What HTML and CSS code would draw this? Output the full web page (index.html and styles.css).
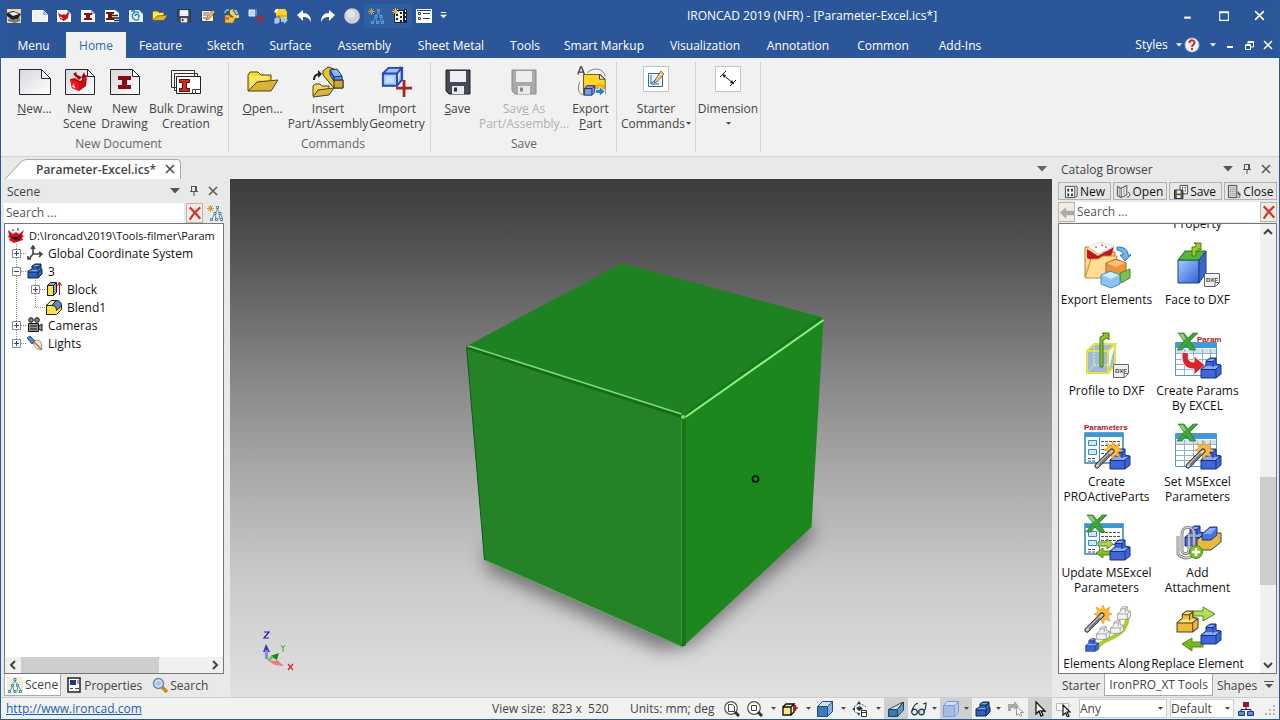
FILE: index.html
```html
<!DOCTYPE html>
<html lang="en">
<head>
<meta charset="utf-8">
<title>IRONCAD 2019</title>
<link rel="stylesheet" href="styles.css">
</head>
<body>
<svg class="defs" aria-hidden="true">
  <defs>
    <linearGradient id="g-blue" x1="0" y1="0" x2="1" y2="1"><stop offset="0" stop-color="#a9cbff"/><stop offset="1" stop-color="#2f5fd6"/></linearGradient>
    <linearGradient id="g-page" x1="0" y1="0" x2="1" y2="1"><stop offset="0" stop-color="#d5d7dc"/><stop offset="1" stop-color="#fff"/></linearGradient>
    <linearGradient id="g-green" x1="0" y1="0" x2="0" y2="1"><stop offset="0" stop-color="#c2e36c"/><stop offset="1" stop-color="#6fae12"/></linearGradient>
    <linearGradient id="g-folder" x1="0" y1="0" x2="1" y2="1"><stop offset="0" stop-color="#ffe9a8"/><stop offset="1" stop-color="#f0b24a"/></linearGradient>
  </defs>
  <symbol id="logo" viewBox="0 0 16 16"><path fill="#e8d9a4" d="M1 1h14v14H1z"/><path fill="#222" d="M1 5l6-2 8 3-3 5-6 1-5-4z"/><path fill="#eee" d="M3 5l5-1 5 2-6 2z"/><path fill="#777" d="M2 11l8 1 4-2v3l-5 2-7-2z"/></symbol>
  <symbol id="page-s" viewBox="0 0 16 16"><path fill="#eef0f4" stroke="#fff" d="M.5 2.500h11l4 4v7H.5z"/><path fill="#aab4c8" d="M11 2v5h5z"/></symbol>
  <symbol id="scene-s" viewBox="0 0 16 16"><path fill="#fff" d="M1 2h10l4 4v8H1z"/><path fill="#aab4c8" d="M11 2v4h4z"/><path fill="#c4161c" d="M2 5l4 2 2-1 1 1 4-3-1 6-4 3-4-2z"/><path stroke="#fff" fill="none" d="M4 9l2 1v1"/></symbol>
  <symbol id="draw-s" viewBox="0 0 16 16"><path fill="#fff" d="M1 2h10l4 4v8H1z"/><path fill="#aab4c8" d="M11 2v4h4z"/><path fill="#8d1015" d="M4 5h8v2h-2v3h2v2H4v-2h2V7H4z"/></symbol>
  <symbol id="bulk-s" viewBox="0 0 16 16"><path fill="#fff" d="M1 2h10l4 3v9H1z"/><path fill="#711" d="M2 4h8v2H8v4h2v2H2v-2h2V6H2z"/><path stroke="#222" stroke-width="1.500" d="M8 7.500h6M8 10h7M10 12.500h5"/></symbol>
  <symbol id="cat-s" viewBox="0 0 16 16"><path fill="#e6f2fb" d="M1 2h10l4 4v8H1z"/><path fill="none" stroke="#2c7fbd" stroke-width="1.500" d="M11 5a4 4 0 1 0 0 6M7 8a2 2 0 1 1 3 2M3 3h4"/></symbol>
  <symbol id="folder" viewBox="0 0 32 24"><path fill="#f6dd2c" stroke="#4e4310" d="M1 21V5l2-3h8l3 3h10v5"/><path fill="#ffe96a" d="M3 6h18v4H10L3 18z"/><path fill="#d9b23a" stroke="#4e4310" d="M1 21l9-9 21-2-7 11z"/></symbol>
  <symbol id="disk" viewBox="0 0 26 26"><path fill="#454a58" stroke="#1e2129" d="M1 1h24v24H4l-3-3z"/><path fill="#eef0f3" d="M5 2h16v11H5z"/><path fill="#e8e9ec" d="M7 17h12v8H7z"/><path fill="#30333d" d="M9 18.500h3v4H9z"/></symbol>
  <symbol id="disk-off" viewBox="0 0 26 26"><path fill="#a9a9a9" stroke="#8d8d8d" d="M1 1h24v24H4l-3-3z"/><path fill="#ededed" d="M5 2h16v11H5z"/><path fill="#e9e9e9" d="M7 17h12v8H7z"/><path fill="#888" d="M9 18.500h3v4H9z"/></symbol>
  <symbol id="saveas-s" viewBox="0 0 16 16"><path fill="#eee" stroke="#444" d="M1.500 2.500h12v11h-12z"/><path stroke="#777" d="M3 5h6M3 7h5M3 10h4"/><path fill="#e9b76b" stroke="#6a4010" stroke-width=".6" d="M13 2l2 2-6 7-3 1 1-3z"/></symbol>
  <symbol id="blocks-y" viewBox="0 0 32 32"><path fill="#e8c431" stroke="#3c3516" d="M11 5l5-4 6 2 9 11v8h-9L11 9z"/><path fill="#cfa638" stroke="#3c3516" d="M22 14h9v8h-9z"/><path fill="#8ab6f5" stroke="#1d3872" d="M18 4l7-1 5 7-8 1z"/><path fill="#3e6fd0" stroke="#1d3872" d="M18 4l4 7v4l-4-6z"/><path fill="#5c8fe4" stroke="#1d3872" d="M22 11l8-1v4h-8z"/><path fill="#f2d55e" stroke="#4e4310" d="M1 30V20l2-2h5l2 2h7v3"/><path fill="#dab348" stroke="#4e4310" d="M1 31l5-7 16-2-5 7z"/><path fill="none" stroke="#222" stroke-width="2" d="M2 14c0-5 3-6 6-6"/><path fill="#222" d="M6 4l4 4-4 4z"/></symbol>
  <symbol id="insert-s" viewBox="0 0 16 16"><path fill="#f0c040" stroke="#7b5b10" stroke-width=".7" d="M1 15V7h5v2h6l-3 6z"/><path fill="#f7d53c" d="M6 2l4-1 5 6v3h-4L6 6z"/><path fill="#7fb8f0" stroke="#173f78" stroke-width=".7" d="M9 2l4-1 2 5-3 1z"/><path fill="#e8632a" d="M2 9h3v3H2z"/><path stroke="#fff" fill="none" d="M1 5c0-3 2-3 4-3"/></symbol>
  <symbol id="import" viewBox="0 0 34 34"><path fill="#f5dfa6" stroke="#2b4fa5" d="M14 3l7-2 2 1v13l-5 4z"/><path fill="#9fc4ff" stroke="#1f49ad" stroke-width="2" d="M2 8h15v13H2zM2 8l6-6h14l-5 6M17 21l5-6V2"/><path fill="#c9deff" d="M5 11h9v7H5z"/><path fill="#a9232b" d="M23 15h3v7h7v3h-7v8h-3v-8h-7v-3h7z"/></symbol>
  <symbol id="import-s" viewBox="0 0 16 16"><path fill="#b9d4ff" stroke="#e8f0ff" d="M1 2h6v6H1z"/><path fill="#5589dd" d="M7 2l2-1v6L7 9z"/><path fill="#b0232b" d="M11 7h2v3h3v2h-3v3h-2v-3H8v-2h3z"/></symbol>
  <symbol id="export" viewBox="0 0 32 34"><path fill="none" stroke="#777" d="M12 7c7-6 17-5 19 4M4 17c-3 8-1 13 5 14"/><path fill="none" stroke="#444" stroke-width="1.500" d="M2 9l3-8h1l3 8M3.500 6.500h4"/><path fill="#ffd42a" stroke="#6b5100" d="M8 9h18l5 5v16H8z"/><path fill="#f5ae16" d="M9 20h21v9H9z"/><path fill="#f1f1f1" d="M9 25h22v7H9z"/><path fill="#fff" stroke="#333" d="M25 9v5h6z"/><path fill="#7f9bd8" stroke="#102d6e" d="M9 24l3-3h8v7l-3 3H9zM9 24h8v7M17 24l3-3"/><path fill="#2279dc" d="M21 25h4v-3l6 5-6 5v-3h-4z" stroke="#fff" stroke-width=".7"/></symbol>
  <symbol id="export-s" viewBox="0 0 16 16"><path fill="#ffd42a" d="M4 1h9l2 3v7H4z"/><path fill="#fff" d="M2 4l2-3h2L4 5z"/><path fill="#f5ae16" d="M4 7h11v2H4z"/><path fill="#a9c5f3" stroke="#244b93" stroke-width=".7" d="M2 11l2-2h4v5l-2 2H2z"/><path fill="#8fd0ff" d="M9 11h3V9l4 3-4 4v-2H9z"/></symbol>
  <symbol id="undo" viewBox="0 0 16 16"><path fill="#fff" d="M1 7l6-5v3c5 0 8 3 8 9-2-4-4-5-8-5v4z"/></symbol>
  <symbol id="redo" viewBox="0 0 16 16"><path fill="#fff" d="M15 7L9 2v3c-5 0-8 3-8 9 2-4 4-5 8-5v4z"/></symbol>
  <symbol id="sphere" viewBox="0 0 16 16"><circle cx="8" cy="8" r="7.800" fill="#d0d1d2"/><circle cx="7" cy="6" r="4" fill="#e3e4e4"/></symbol>
  <symbol id="tree" viewBox="0 0 16 16"><path stroke="#6293b5" fill="none" d="M10.500 4L8 9m2.500-5L13 9M7 10l-2 4m3-4l1 4m4-4l-1 4m2-4l2 4"/><path fill="#fff" stroke="#447fa8" d="M9.500 1.500h2v2h-2zM7 7.500h2v2H7zM12 7.500h2v2h-2zM3.500 13.500h2v2h-2zM8.500 13.500h2v2h-2zM13.500 13.500h2v2h-2z"/><path stroke="#d49a28" d="M3.500 0v7M0 3.500h7M1 1l5 5M6 1L1 6"/></symbol>
  <symbol id="tree-q" viewBox="0 0 16 16"><path stroke="#5a93cf" fill="none" d="M10.500 4L8 9m2.500-5L13 9M7 10l-2 4m3-4l1 4m4-4l-1 4m2-4l2 4"/><path fill="#2b579a" stroke="#6aa5dd" d="M9.500 1.500h2v2h-2zM7 7.500h2v2H7zM12 7.500h2v2h-2zM3.500 13.500h2v2h-2zM8.500 13.500h2v2h-2zM13.500 13.500h2v2h-2z"/><path stroke="#c09a58" d="M3.500 0v7M0 3.500h7M1 1l5 5M6 1L1 6"/></symbol>
  <symbol id="tree-p" viewBox="0 0 16 16"><path fill="#f1eedb" d="M0 0h16v16H0z"/><path stroke="#6293b5" fill="none" d="M8 4L5 8m3-4l3 4M5 10l-2 4m3-4l1 4m4-4l-1 4m2-4l2 4"/><path fill="#fff" stroke="#447fa8" d="M7 1.500h2v2H7zM4.500 7.500h2v2h-2zM9.500 7.500h2v2h-2zM1.500 13.500h2v2h-2zM7 13.500h2v2H7zM12.500 13.500h2v2h-2z"/></symbol>
  <symbol id="building" viewBox="0 0 16 16"><path fill="#f3f3f3" stroke="#222" d="M2.500 2.500h9v12h-9z"/><path fill="#222" d="M12 1h3v14h-3z"/><path stroke="#222" stroke-width="2" stroke-dasharray="2 2" d="M5 6v8M9 4v10"/><path stroke="#fff" stroke-dasharray="2 2" d="M13.500 2v12"/><path stroke="#eeb14b" d="M3.500 0v7M0 3.500h7M1 1l5 5M6 1L1 6"/></symbol>
  <symbol id="list" viewBox="0 0 16 16"><path fill="#fff" d="M0 1h16v14H0z"/><path stroke="#27436f" d="M7 5.500h7M7 10.500h7M1 2.500h14"/><path fill="none" stroke="#27436f" d="M2.500 4.500h2v2h-2zM2.500 9.500h2v2h-2z"/></symbol>
  <symbol id="more" viewBox="0 0 8 8"><path fill="#fff" d="M1 0h6v1H1zM0 3h8L4 7z"/></symbol>
  <symbol id="page" viewBox="0 0 32 26"><path fill="url(#g-page)" stroke="#25272d" d="M.5.500h22l9 9v16H.5z"/><path fill="#fff" stroke="#25272d" d="M22.500.500v9h9z"/></symbol>
  <symbol id="scene-b" viewBox="0 0 30 26"><path fill="url(#g-page)" stroke="#25272d" d="M.5.500h22l7 7v18H.5z"/><path fill="#fff" stroke="#25272d" d="M22.500.500v7h7z"/><path fill="#c10d14" d="M5 10l5-1 5 3 7-4-1 9-7 5-7-3z"/><path fill="#f0161f" d="M5 10l9 4v8l-7-3z"/><path fill="#a00" d="M8 5l3-2 1 3 5 2-3 3zM17 7l2-4 1 3 3 1-6 4z"/><path stroke="#fff" fill="none" d="M7 17l3 2-2-4"/></symbol>
  <symbol id="draw-b" viewBox="0 0 30 26"><path fill="url(#g-page)" stroke="#25272d" d="M.5.500h22l7 7v18H.5z"/><path fill="#fff" stroke="#25272d" d="M22.500.500v7h7z"/><path fill="#8d090e" d="M8 7h13v4h-4v5h4v4H8v-4h4v-5H8z"/></symbol>
  <symbol id="bulk-b" viewBox="0 0 32 26"><path fill="#f6f6f6" stroke="#333" d="M1.500 1.500h23v17h-23zM4.500 4.500h23v17h-23z"/><path fill="#fff" stroke="#222" d="M6.500 7.500h24v17h-24z"/><path fill="#d63118" stroke="#441010" d="M9.500 10.500h10v3h-3v6h3v3h-10v-3h3v-6h-3z"/><path fill="none" stroke="#444" d="M22.500 20.500h8M25.500 20.500v4M22.500 20.500v4"/></symbol>
  <symbol id="starter" viewBox="0 0 26 26"><path fill="#fff" stroke="#c3c3c3" d="M.5.500h25v25H.5z"/><path fill="#e6f5ff" stroke="#2a6f9d" d="M5.500 7.500h14v13h-14z"/><path stroke="#2a6f9d" fill="none" d="M8 9v9h8M8 18l8-8"/><path fill="#efc48b" stroke="#704720" stroke-width=".7" d="M18 5l3 3-7 8-3 1 1-3z"/></symbol>
  <symbol id="dim" viewBox="0 0 26 26"><path fill="#fff" stroke="#c3c3c3" d="M.5.500h25v25H.5z"/><path stroke="#222" fill="none" d="M7 8l12 10M5 11l6-6M15 20l6-6"/><path fill="#222" d="M7 8l4 1-2 3zM19 18l-4-1 2-3z"/></symbol>
  <symbol id="min" viewBox="0 0 12 12"><path fill="#fff" d="M3 7h6v2H3z"/></symbol>
  <symbol id="max" viewBox="0 0 12 12"><path fill="none" stroke="#fff" d="M2.500 2.500h8v8h-8zM2 3.500h9"/></symbol>
  <symbol id="restore" viewBox="0 0 12 12"><path fill="none" stroke="#fff" d="M2.500 5.500h5v5h-5zM5 5V2.500h5.500V8H8M5 3.500h5M2 6.500h5"/></symbol>
  <symbol id="x" viewBox="0 0 12 12"><path fill="none" stroke="currentColor" stroke-width="1.500" d="M2 2l8 8M10 2l-8 8"/></symbol>
  <symbol id="pin" viewBox="0 0 12 12"><path fill="none" stroke="#555" d="M3.500 1v5.500M8.500 1v5.500M3 1.500h6M2 6.500h8M6 7v4M7.500 2v4"/></symbol>
  <symbol id="caret" viewBox="0 0 10 6"><path fill="currentColor" d="M0 0h10L5 5.500z"/></symbol>
  <symbol id="redx" viewBox="0 0 16 16"><path fill="none" stroke="#c8373a" stroke-width="2.500" d="M2 1c4 4 8 8 12 13M14 1C9 5 5 10 2 15"/></symbol>
  <symbol id="help" viewBox="0 0 16 16"><circle cx="8" cy="8" r="7" fill="#f5f5f8" stroke="#a5b9da"/><path fill="none" stroke="#d3232a" stroke-width="2" d="M5.500 6c0-4 5.500-3 5 0 0 1.500-2.500 1.500-2.500 4M8 11v2"/></symbol>
  <symbol id="robot" viewBox="0 0 16 16"><path fill="#d0141b" d="M0 3l5 4 3-2 3 2 5-4-2 5 2 1-2 2 1 2-6 2-3 1-5-3 1-2-2-1 1-2z"/><path stroke="#611" d="M5 2v2M10 1v3M3 10l5 3 5-3"/><path fill="#8a0d12" d="M9 9l5-2-2 6-3 1z"/></symbol>
  <symbol id="axes" viewBox="0 0 16 16"><path fill="none" stroke="#444" stroke-width="1.600" d="M6 2v7h9M6 9l-4 5M4 4l2-3 2 3M12 7l3 2-3 3M1 11v3h3"/></symbol>
  <symbol id="part" viewBox="0 0 16 16"><path fill="#2d62b8" stroke="#0c2148" d="M1 8l4-2V3l3-2h6v4l1 2v4l-4 4H1z"/><path fill="#7aa9ec" d="M2 8l3-1h4l5-1-3 3H2zM6 3l2-1h5l-2 2H6z"/><path stroke="#0c2148" fill="none" d="M2 9h9v5M6 4h5v4M11 9l4-3M11 4l3-2"/></symbol>
  <symbol id="block" viewBox="0 0 16 16"><path fill="#ffe14a" stroke="#222" d="M1.500 4.500h6v10h-6z"/><path fill="#8aa6c8" stroke="#222" d="M1.500 4.500l3-3h6l-3 3zM7.500 4.500l3-3v10l-3 3z"/><path stroke="#c00" fill="none" d="M13.500 2v12M11.500 5l2-4 2 4"/></symbol>
  <symbol id="blend" viewBox="0 0 16 16"><path fill="#ffe14a" stroke="#222" d="M.5 6v9.500h10l5-5V7L11 3z"/><path fill="#fff0a0" stroke="#222" d="M.5 6.500L5 1.500h5L6 6.500z"/><path fill="#5f86b4" stroke="#222" d="M6 6.500l4-5c4 0 5.500 2 5.500 5.500l-5 4.500c0-3-1.500-5-4.500-5z"/></symbol>
  <symbol id="camera" viewBox="0 0 16 16"><circle cx="4" cy="3" r="2.300" fill="#888" stroke="#111"/><circle cx="10" cy="3" r="2.300" fill="#888" stroke="#111"/><path fill="#999" stroke="#111" d="M1.500 6.500h10v8h-10zM12 9l3-2v7l-3-2"/><path stroke="#111" d="M3 9h7M3 12h7"/></symbol>
  <symbol id="light" viewBox="0 0 16 16"><path fill="#f0e3d3" stroke="#999" d="M6 8c1-3 5-4 8-1l1 7c-4 1-7 0-9-6z"/><path fill="#4e86c6" stroke="#28507e" d="M0 3l3-2 5 5-3 3z"/><path stroke="#c76a2a" stroke-width="1.500" d="M7 7l8 8"/></symbol>
  <symbol id="t-v" viewBox="0 0 19 18"><path stroke="#888" stroke-dasharray="1 1" d="M9.500 0v18"/></symbol>
  <symbol id="t-elbow" viewBox="0 0 19 18"><path fill="none" stroke="#888" stroke-dasharray="1 1" d="M9.500 0v9.500H19"/></symbol>
  <symbol id="t-plus" viewBox="0 0 19 18"><path stroke="#888" stroke-dasharray="1 1" d="M9.500 0v18M14 9.500h5"/><path fill="#fff" stroke="#8a8a8a" d="M5.500 5.500h8v8h-8z"/><path stroke="#34478c" d="M7 9.500h5M9.500 7v5"/></symbol>
  <symbol id="t-last" viewBox="0 0 19 18"><path stroke="#888" stroke-dasharray="1 1" d="M9.500 0v9M14 9.500h5"/><path fill="#fff" stroke="#8a8a8a" d="M5.500 5.500h8v8h-8z"/><path stroke="#34478c" d="M7 9.500h5M9.500 7v5"/></symbol>
  <symbol id="t-minus" viewBox="0 0 19 18"><path stroke="#888" stroke-dasharray="1 1" d="M9.500 0v18M14 9.500h5"/><path fill="#fff" stroke="#8a8a8a" d="M5.500 5.500h8v8h-8z"/><path stroke="#34478c" d="M7 9.500h5"/></symbol>
  <symbol id="props" viewBox="0 0 14 16"><path fill="#fff" stroke="#222" stroke-width="1.500" d="M1 1h12v14H1z"/><path fill="#1f3a7a" d="M3 3h6v5H3z"/><path stroke="#444" d="M10 4h2M10 6h2M3 11.500h3M8 11.500h4"/></symbol>
  <symbol id="lens" viewBox="0 0 16 16"><path stroke="#c98a1e" stroke-width="3.500" d="M10 10l5 5"/><circle cx="6.500" cy="6.500" r="5" fill="#cfe0f6" stroke="#6c86b0" stroke-width="1.500"/><circle cx="6.500" cy="6.500" r="2.500" fill="#a7c3ea"/></symbol>
  <symbol id="zoomfit" viewBox="0 0 16 16"><circle cx="7" cy="7" r="6.300" fill="#fff" stroke="#555" stroke-width="1.200"/><path stroke="#333" stroke-width="3" d="M11 11l4 4"/><path fill="#fff" stroke="#444" d="M4.500 3.500h4l2 2v5h-6z"/></symbol>
  <symbol id="zoomwin" viewBox="0 0 16 16"><circle cx="7" cy="7" r="6.300" fill="#fff" stroke="#555" stroke-width="1.200"/><path stroke="#333" stroke-width="3" d="M11 11l4 4"/><path fill="#fff" stroke="#444" d="M4.500 4.500h5v5h-5z"/></symbol>
  <symbol id="ycube" viewBox="0 0 16 16"><path fill="#fff3a0" stroke="#111" stroke-width="1.400" d="M1 6h8v8H1zM1 6l3-3h8L9 6M9 14l3-3V3"/><path fill="#f9e97a" d="M2 7h6v6H2z"/><path stroke="#c1121c" stroke-width="1.500" d="M13.500 4v6M11 7h5"/></symbol>
  <symbol id="bcube" viewBox="0 0 16 16"><path fill="#3d78bc" stroke="#234f85" d="M.5 5.500h10v10H.5z"/><path fill="#cfe2f6" stroke="#234f85" d="M.5 5.500l5-5h10l-5 5z"/><path fill="#7fb0e2" stroke="#234f85" d="M10.500 5.500l5-5v10l-5 5z"/></symbol>
  <symbol id="lcube" viewBox="0 0 16 16"><path fill="#a4bbe6" stroke="#7f9cd4" d="M.5 4.500h11v11H.5z"/><path fill="#d3dff5" stroke="#7f9cd4" d="M.5 4.500l4-4h11l-4 4z"/><path fill="#b7caee" stroke="#7f9cd4" d="M11.500 4.500l4-4v11l-4 4z"/></symbol>
  <symbol id="orbit" viewBox="0 0 16 16"><path fill="#333" d="M7 0l2 3H5zM0 8l3-2v4zM7 15l-2-3h3zM4 7l4-2 3 3-4 2z"/><path stroke="#2a7fae" fill="none" stroke-dasharray="2 1" d="M2 6c3-4 8-4 12 0M2 10c1 2 3 2 5 2"/><path fill="#fff" stroke="#333" d="M9.500 9.500h5v6h-5zM9.500 11.500h5"/></symbol>
  <symbol id="wedge" viewBox="0 0 16 16"><path fill="#3978ad" stroke="#1e4568" d="M.5 8.500h9v7h-9z"/><path fill="#d9ecf8" stroke="#1e4568" d="M.5 8.500L15 1 9.500 8.500z"/><path fill="#5f97c2" stroke="#1e4568" d="M9.500 8.500l6-7.500v8l-6 6.500z"/></symbol>
  <symbol id="glasses" viewBox="0 0 16 16"><circle cx="3.500" cy="11" r="2.800" fill="#e0eff8" stroke="#234" stroke-width="1.200"/><circle cx="10.500" cy="11" r="2.800" fill="#b9dbee" stroke="#234" stroke-width="1.200"/><path fill="none" stroke="#234" stroke-width="1.200" d="M1 10c1-4 3-7 6-8M6 11h2M13 10c2-2 2-5 2-8l-3 1"/></symbol>
  <symbol id="arrow-g" viewBox="0 0 16 16"><path fill="#a9a9a9" d="M0 3h6V0l5 5-5 4V7H3v3H0z"/><path fill="#fff" stroke="#999" d="M8.500 5.500v9l2-2 2 3 1-1-1-3h3z"/></symbol>
  <symbol id="cursor" viewBox="0 0 12 16"><path fill="#fff" stroke="#111" stroke-width="1.300" d="M2 1v12l3-3 2 5 2-1-2-4h4z"/></symbol>
  <symbol id="cursor-box" viewBox="0 0 16 16"><path fill="#fff" stroke="#bbb" d="M.5 2.500h12v7H.5z"/><path fill="#fff" stroke="#111" stroke-width="1.200" d="M7 4v10l2.500-2 2 4 1.500-1-2-4h3z"/></symbol>
  <symbol id="org" viewBox="0 0 16 16"><path stroke="#222" fill="none" d="M8 5v4M3 11V8.500h10V11"/><path fill="#8e1a34" d="M5 1h6v5H5z"/><path fill="#5d8be0" stroke="#1b3d86" d="M.5 10.500h6v4h-6zM9.500 10.500h6v4h-6z"/></symbol>
  <symbol id="grip" viewBox="0 0 12 12"><path fill="#b5b5b5" d="M9 0h2v2H9zM9 4h2v2H9zM9 8h2v2H9zM5 4h2v2H5zM5 8h2v2H5zM1 8h2v2H1z"/></symbol>
  <symbol id="book" viewBox="0 0 16 16"><path fill="#f7f7f2" stroke="#444" d="M1.500 2.500h10v12h-10zM12 2l2 1v10l-2 1"/><path stroke="#333" stroke-width="2" stroke-dasharray="3 2" d="M4.500 5v8M8.500 5v8"/></symbol>
  <symbol id="book-open" viewBox="0 0 16 16"><path fill="#eee" stroke="#444" d="M1.500 2.500l4 2v10l-4-2zM5.500 4.500l6-3v10l-6 3"/><path stroke="#333" stroke-dasharray="1 1" d="M8.500 4v8M3.500 4v9"/><path fill="none" stroke="#333" d="M13 9c3 1 2 5-1 5"/></symbol>
  <symbol id="book-save" viewBox="0 0 16 16"><path fill="#f7f7f2" stroke="#444" d="M6.500 1.500h8v9h-8z"/><path stroke="#333" stroke-dasharray="2 1" d="M9 3v6M12 3v6"/><path fill="#55604a" stroke="#222" d="M.5 6.500h9v9h-9z"/><path fill="#eee" d="M3 7h4v3H3zM3 12h4v3H3z"/></symbol>
  <symbol id="book-close" viewBox="0 0 16 16"><path fill="#d9d9d9" stroke="#444" d="M1.500 1.500h9v13h-9z"/><path stroke="#777" stroke-dasharray="1 1" d="M3 4h7M3 6h7M3 8h7M3 10h7M3 12h7"/><path fill="none" stroke="#333" d="M12 9c3 1 2 5 0 6M12 8v3h2"/></symbol>
  <symbol id="back" viewBox="0 0 16 16"><path fill="#a9a9a9" d="M0 8l7-6v4h9v5H7v4z"/></symbol>
  <symbol id="bigpart" viewBox="0 0 22 22"><path fill="#3f66d6" stroke="#173085" d="M1 12l5-4V4l4-3h6v6l5 1v9l-5 4H1z"/><path fill="#86aaf5" d="M2 12l4-3h13l-3 3zM7 4l3-2h5l-2 2z"/><path fill="none" stroke="#173085" d="M1 12.500h15v8M6 4.500h7V10M16 12l5-4M13 4.500l3-3"/></symbol>
  <symbol id="goldpart" viewBox="0 0 22 22"><path fill="#eebc3c" stroke="#54400e" d="M1 12l5-4V4l4-3h6v6l5 1v9l-5 4H1z"/><path fill="#ffe493" d="M2 12l4-3h13l-3 3zM7 4l3-2h5l-2 2z"/><path fill="none" stroke="#54400e" d="M1 12.500h15v8M6 4.500h7V10M16 12l5-4M13 4.500l3-3"/></symbol>
  <symbol id="whitepart" viewBox="0 0 22 22"><path fill="#f3f3f3" stroke="#777" d="M1 12l5-4V4l4-3h6v6l5 1v9l-5 4H1z"/><path fill="none" stroke="#777" d="M1 12.500h15v8M6 4.500h7V10M16 12l5-4M13 4.500l3-3"/></symbol>
  <symbol id="xl" viewBox="0 0 22 20"><path fill="#3fa535" stroke="#2b7a25" stroke-width=".7" d="M1 1h6l4 5 5-5h5l-8 8 6 9h-6l-4-5-4 5H0l7-9z"/><path fill="#8dd47d" d="M2 2h4l3 5-2 1z"/></symbol>
  <symbol id="sheet" viewBox="0 0 42 34"><path fill="#fff" stroke="#5d93c4" d="M.5.500h41v33H.5z"/><path fill="#3f9bd8" d="M1 1h40v5H1z"/><path fill="#cfe3f5" d="M1 7h40v4H1z"/><path stroke="#8fb4d6" fill="none" d="M1 11.500h40M1 17.500h40M1 22.500h40M1 27.500h40M9.500 7v26M18.500 7v26M27.500 7v26M35.500 7v26"/></symbol>
  <symbol id="form" viewBox="0 0 40 32"><path fill="#fff" stroke="#2f86be" stroke-width="1.500" d="M1 1h38v30H1z"/><path fill="#3a97d2" d="M1 1h38v4H1z"/><path fill="#cfe8fa" stroke="#3a8cc2" d="M4.500 8.500h8v5h-8zM4.500 17.500h8v5h-8z"/><path stroke="#555" stroke-dasharray="3 1" d="M17 9.500h20M17 13.500h20M17 17.500h20M17 21.500h20M4 26.500h8M4 29h8"/><path stroke="#3a8cc2" d="M15.500 5v26"/></symbol>
  <symbol id="wand" viewBox="0 0 28 28"><path fill="#ffb938" stroke="#e08a16" stroke-width=".6" d="M19 0l2 5 5-3-2 5 4 2-4 2 2 5-5-2-2 5-2-5-5 2 2-5-4-2 4-2-2-5 5 3z"/><path stroke="#333" stroke-width="5" stroke-linecap="round" d="M3 25L18 10"/><path stroke="#ccc" stroke-width="3" stroke-linecap="round" d="M3 25L18 10"/><path stroke="#777" stroke-width="2" d="M5 24L16 13"/></symbol>
  <symbol id="tag" viewBox="0 0 16 14"><path fill="#f0f0f0" stroke="#666" d="M.5.500h15v9l-4 4H.5zM15 9.500h-4v4"/></symbol>
  <symbol id="export-el" viewBox="0 0 48 48"><path fill="url(#g-folder)" stroke="#c07a1d" d="M2 36V6h10l4 5h16v25z"/><path fill="#c3121b" d="M4 8l11 7 16-9-3 9-13 7-11-5z"/><path fill="#fff" stroke="#bbb" stroke-width=".6" d="M5 6l12-5 14 4-15 8z"/><path stroke="#c3121b" d="M12 6h2M18 4h2M22 6h2"/><path fill="#ffdf95" stroke="#c88a2c" d="M2 37l6-19h7l5-3h14l-6 22z"/><path fill="#70b6ea" stroke="#2b74a8" d="M34 6c8 0 11 3 11 8h3l-6 6-5-6h3c0-3-2-4-6-5z"/><path fill="#ee9337" stroke="#ba611a" d="M23 22l10-4 10 4v10l-10 4-10-4z"/><path fill="#ffc27d" d="M24 22l9-3 9 3-9 4z"/><path fill="#78c250" stroke="#4d8a24" d="M37 32l10-4v9l-9 5z"/><path fill="#8ec4f2" stroke="#4189c4" d="M18 34l9-4 10 4v9l-9 4-10-4z"/><path fill="#d4ebff" d="M19 34l9-3 8 3-8 4z"/></symbol>
  <symbol id="face-dxf" viewBox="0 0 48 48"><path fill="url(#g-blue)" stroke="#1f3d8c" d="M4 19h21v23H4z"/><path fill="#4fb83c" stroke="#246b1a" d="M4 19l7-9h21l-7 9z"/><path fill="#3b66c8" stroke="#1f3d8c" d="M25 19l7-9v22l-7 10z"/><path fill="#9ccc2c" stroke="#4b7d0e" d="M18 15V6h4V3l-2-1h7v7l-2-2v3h-3v5z"/><use href="#tag" x="30" y="32" width="16" height="14"/></symbol>
  <symbol id="prof-dxf" viewBox="0 0 48 48"><path fill="#9eb8de" stroke="#e4e13e" stroke-width="2" d="M4 19h21v22H4zM4 19l7-7h21l-7 7M25 41l7-8V12"/><path stroke="#fffb7a" stroke-dasharray="2 1" fill="none" d="M11 12v21h21M11 33l-7 8"/><path fill="#8cc028" stroke="#457a10" d="M17 35V5l4-2-2-2h7v7l-2-2-4 2v27z"/><use href="#tag" x="30" y="32" width="16" height="14"/></symbol>
  <symbol id="params-xl" viewBox="0 0 48 48"><use href="#sheet" x="1" y="10" width="42" height="34"/><use href="#xl" x="3" y="0" width="22" height="20"/><path fill="#d8262c" stroke="#fff" d="M8 20c-1 14 5 17 12 17v6l11-10-11-9v6c-5 0-7-3-5-9z"/><use href="#bigpart" x="26" y="25" width="22" height="22"/></symbol>
  <symbol id="proactive" viewBox="0 0 48 48"><use href="#form" x="1" y="9" width="40" height="32"/><use href="#bigpart" x="26" y="25" width="22" height="22"/><use href="#wand" x="11" y="18" width="28" height="28"/></symbol>
  <symbol id="set-xl" viewBox="0 0 48 48"><use href="#sheet" x="1" y="10" width="42" height="34"/><use href="#xl" x="3" y="0" width="22" height="20"/><use href="#bigpart" x="26" y="25" width="22" height="22"/><use href="#wand" x="11" y="18" width="28" height="28"/></symbol>
  <symbol id="upd-xl" viewBox="0 0 48 48"><use href="#form" x="1" y="9" width="40" height="32"/><use href="#xl" x="3" y="0" width="22" height="20"/><path fill="url(#g-green)" stroke="#548b12" d="M15 28h9v-3l6 5-6 5v-3h-9zM29 37h-9v-3l-7 5 7 5v-3h9z"/><use href="#bigpart" x="26" y="25" width="22" height="22"/></symbol>
  <symbol id="attach" viewBox="0 0 48 48"><use href="#bigpart" x="10" y="11" width="22" height="22"/><path fill="#e9b93f" stroke="#54400e" d="M23 26l9-7h15v9l-10 8H23z"/><path fill="#ffe493" d="M24 26l9-6h12l-8 6z"/><path fill="#4b76cf" stroke="#173085" d="M28 20l8-7h7v8l-6 5h-9z"/><path fill="#86aaf5" d="M29 20l7-6h6l-5 6z"/><path fill="none" stroke="#888" stroke-width="3" d="M15 20v16c0 5-7 5-7 0V20c0-9 12-9 12 0v17c0 8-11 9-16 3V22"/><path fill="none" stroke="#e5e5e5" d="M15 20v16c0 5-7 5-7 0V20c0-9 12-9 12 0v17c0 8-11 9-16 3V22"/><circle cx="22" cy="38" r="6.500" fill="#7dc32e" stroke="#3f8a12"/><path stroke="#fff" stroke-width="2.500" d="M18 38h8M22 34v8"/></symbol>
  <symbol id="along" viewBox="0 0 48 48"><path fill="none" stroke="#a6cf2c" stroke-width="4" d="M13 46c5-17 30-8 32-36"/><use href="#wand" x="1" y="0" width="28" height="28"/><use href="#whitepart" x="34" y="1" width="14" height="14"/><use href="#whitepart" x="27" y="15" width="14" height="14"/><use href="#whitepart" x="13" y="21" width="14" height="14"/><use href="#bigpart" x="2" y="33" width="14" height="14"/></symbol>
  <symbol id="replace" viewBox="0 0 48 48"><path fill="url(#g-green)" stroke="#548b12" d="M19 6h10V2l12 7-12 7v-5H19zM29 37H18v-4L8 39l10 7v-4h11z"/><use href="#goldpart" x="2" y="5" width="23" height="23"/><use href="#bigpart" x="26" y="18" width="22" height="22"/></symbol>
</svg>

<div class="app">
  <header class="titlebar">
    <div class="qat">
      <button class="q logo" aria-label="IronCAD"><svg><use href="#logo"/></svg></button>
      <button class="q" aria-label="New"><svg><use href="#page-s"/></svg></button>
      <button class="q" aria-label="New scene"><svg><use href="#scene-s"/></svg></button>
      <button class="q" aria-label="New drawing"><svg><use href="#draw-s"/></svg></button>
      <button class="q" aria-label="Bulk drawing"><svg><use href="#bulk-s"/></svg></button>
      <button class="q" aria-label="Catalog"><svg><use href="#cat-s"/></svg></button>
      <button class="q" aria-label="Open"><svg><use href="#folder"/></svg></button>
      <button class="q" aria-label="Save"><svg class="small"><use href="#disk"/></svg></button>
      <button class="q" aria-label="Save as"><svg><use href="#saveas-s"/></svg></button>
      <button class="q" aria-label="Insert part"><svg><use href="#insert-s"/></svg></button>
      <button class="q" aria-label="Import geometry"><svg><use href="#import-s"/></svg></button>
      <button class="q" aria-label="Export part"><svg><use href="#export-s"/></svg></button>
      <button class="q" aria-label="Undo"><svg><use href="#undo"/></svg></button>
      <button class="q" aria-label="Redo"><svg><use href="#redo"/></svg></button>
      <button class="q" aria-label="Render"><svg><use href="#sphere"/></svg></button>
      <button class="q on" aria-label="Scene browser"><svg><use href="#tree-q"/></svg></button>
      <button class="q on" aria-label="Catalogs"><svg><use href="#building"/></svg></button>
      <button class="q" aria-label="Properties"><svg><use href="#list"/></svg></button>
      <button class="q more" aria-label="Customize"><svg><use href="#more"/></svg></button>
    </div>
    <div class="title">IRONCAD 2019 (NFR) - [Parameter-Excel.ics*]</div>
    <div class="wincontrols">
      <button aria-label="Minimize"><svg><use href="#min"/></svg></button>
      <button aria-label="Maximize"><svg><use href="#max"/></svg></button>
      <button aria-label="Close"><svg><use href="#x"/></svg></button>
    </div>
  </header>

  <nav class="tabbar">
    <div class="tabs">
      <button>Menu</button><button class="active">Home</button><button>Feature</button><button>Sketch</button><button>Surface</button><button>Assembly</button><button>Sheet Metal</button><button>Tools</button><button>Smart Markup</button><button>Visualization</button><button>Annotation</button><button>Common</button><button>Add-Ins</button>
    </div>
    <div class="tabtools">
      <button>Styles<svg class="tiny"><use href="#caret"/></svg></button>
      <button class="help" aria-label="Help"><svg><use href="#help"/></svg><svg class="tiny"><use href="#caret"/></svg></button>
      <button aria-label="Minimize document"><svg class="doc"><use href="#min"/></svg></button>
      <button aria-label="Restore document"><svg class="doc"><use href="#restore"/></svg></button>
      <button aria-label="Close document"><svg class="doc"><use href="#x"/></svg></button>
    </div>
  </nav>

  <section class="ribbon">
    <div class="group g-new">
      <div class="cmds">
        <button><svg><use href="#page"/></svg><span><u>N</u>ew...</span></button>
        <button><svg><use href="#scene-b"/></svg><span>New<br>Scene</span></button>
        <button><svg><use href="#draw-b"/></svg><span>New<br>Drawing</span></button>
        <button class="wide"><svg><use href="#bulk-b"/></svg><span>Bulk Drawing<br>Creation</span></button>
      </div>
      <div class="caption">New Document</div>
    </div>
    <div class="group g-cmd">
      <div class="cmds">
        <button><svg><use href="#folder"/></svg><span><u>O</u>pen...</span></button>
        <button class="wide"><svg class="tall"><use href="#blocks-y"/></svg><span>Insert<br>Part/Assembly</span></button>
        <button class="mid"><svg class="tall"><use href="#import"/></svg><span>Import<br>Geometry</span></button>
      </div>
      <div class="caption">Commands</div>
    </div>
    <div class="group g-save">
      <div class="cmds">
        <button><svg><use href="#disk"/></svg><span><u>S</u>ave</span></button>
        <button class="wider" disabled><svg><use href="#disk-off"/></svg><span>Sav<u>e</u> As<br>Part/Assembly...</span></button>
        <button><svg class="tall"><use href="#export"/></svg><span>Export<br><u>P</u>art</span></button>
      </div>
      <div class="caption">Save</div>
    </div>
    <div class="group g-start">
      <div class="cmds"><button class="wide"><svg class="framed"><use href="#starter"/></svg><span>Starter<br>Commands<svg class="mini"><use href="#caret"/></svg></span></button></div>
    </div>
    <div class="group g-dim">
      <div class="cmds"><button class="mid"><svg class="framed"><use href="#dim"/></svg><span>Dimension<br><svg class="mini"><use href="#caret"/></svg></span></button></div>
    </div>
  </section>

  <main class="work">
    <div class="docs">
      <div class="doctabs">
        <div class="doctab"><svg class="edge" viewBox="0 0 176 20" preserveAspectRatio="none"><path d="M1 20L17 3Q19 .5 23 .5H172Q175.500.500 175.500 4V20" fill="#fff" stroke="#ababab"/></svg><b>Parameter-Excel.ics*</b><button aria-label="Close tab"><svg><use href="#x"/></svg></button></div>
        <button class="tabmenu" aria-label="Documents"><svg class="arrow"><use href="#caret"/></svg></button>
      </div>
      <div class="docbody">
        <aside class="scene">
          <div class="panelhead"><span>Scene</span><button aria-label="Menu"><svg class="arrow"><use href="#caret"/></svg></button><button aria-label="Pin"><svg><use href="#pin"/></svg></button><button aria-label="Close"><svg><use href="#x"/></svg></button></div>
          <div class="searchrow"><input type="text" placeholder="Search ..." aria-label="Search scene"><button class="boxed" aria-label="Clear"><svg><use href="#redx"/></svg></button><button aria-label="Tree options"><svg><use href="#tree"/></svg></button></div>
          <div class="treebox">
            <ul class="tree">
              <li class="path"><svg class="ic"><use href="#robot"/></svg>D:\Ironcad\2019\Tools-filmer\Param</li>
              <li><svg class="g"><use href="#t-plus"/></svg><svg class="ic"><use href="#axes"/></svg>Global Coordinate System</li>
              <li><svg class="g"><use href="#t-minus"/></svg><svg class="ic"><use href="#part"/></svg>3</li>
              <li><svg class="g"><use href="#t-v"/></svg><svg class="g"><use href="#t-plus"/></svg><svg class="ic"><use href="#block"/></svg>Block</li>
              <li><svg class="g"><use href="#t-v"/></svg><svg class="g"><use href="#t-elbow"/></svg><svg class="ic"><use href="#blend"/></svg>Blend1</li>
              <li><svg class="g"><use href="#t-plus"/></svg><svg class="ic"><use href="#camera"/></svg>Cameras</li>
              <li><svg class="g"><use href="#t-last"/></svg><svg class="ic"><use href="#light"/></svg>Lights</li>
            </ul>
            <div class="hscroll"><svg viewBox="0 0 16 16"><path d="M10 4L6 8l4 4"/></svg><div class="track"><i></i></div><svg viewBox="0 0 16 16"><path d="M6 4l4 4-4 4"/></svg></div>
          </div>
          <div class="paneltabs"><button class="active"><svg><use href="#tree-p"/></svg>Scene</button><button><svg><use href="#props"/></svg>Properties</button><button><svg><use href="#lens"/></svg>Search</button></div>
        </aside>
        <section class="viewport">
          <svg class="model" viewBox="230 179 821 518" role="img" aria-label="Green block">
            <defs>
              <filter id="soft" x="-20%" y="-20%" width="140%" height="140%"><feGaussianBlur stdDeviation="9"/></filter>
            </defs>
            <path filter="url(#soft)" fill="#3c383a" opacity=".6" d="M486 545L805 515 812 537 690 645 660 650 486 570z"/>
            <path fill="#1f8222" d="M466 346L616 266Q622 263 628 265L821 317 823 320 684 417z"/>
            <path fill="#248327" d="M466 346L683 416 682 647 484 560z"/>
            <path fill="#1b871d" d="M683 416L823 320 811 527 682 647z"/>
            <path fill="none" stroke="#176a19" stroke-width="3" d="M468 348L683 417"/>
            <path fill="none" stroke="#197119" stroke-width="4" d="M683 419V646"/>
            <path fill="none" stroke="#349438" d="M681 420V644"/>
            <path fill="none" stroke="#7cda7a" stroke-width="1.500" d="M468 346L681 414"/>
            <path fill="none" stroke="#197619" stroke-width="2" d="M685 414L820 318"/>
            <path fill="none" stroke="#8cf186" stroke-width="2" d="M685 417L823 320"/>
            <path fill="none" stroke="#55b655" d="M484 560L682 647"/>
            <path fill="none" stroke="#125815" d="M466 347L484 560"/>
            <circle cx="682.500" cy="417" r="2" fill="#6be06b"/>
            <circle cx="755" cy="479" r="3" fill="#277448" stroke="#061407" stroke-width="1.700"/>
          </svg>
          <svg class="triad" viewBox="0 0 40 44"><path fill="none" stroke="#2020a8" stroke-width="1.200" d="M7 3h5L7 9h5"/><path fill="#3535b8" d="M9 15l4 8H6z"/><path fill="#8787e8" d="M8 21h3v9H8z"/><path fill="#158a1d" d="M22 24l-2 7-7-4z"/><path stroke="#74c074" stroke-width="3" d="M11 31l5-3"/><path fill="#ed7c7c" d="M10 31l9 1v-2l8 7-9-1z"/><path fill="none" stroke="#d32929" stroke-width="1.200" d="M31 35l5 6M36 35l-5 6"/><path fill="none" stroke="#39c439" stroke-width="1.200" d="M24 16l2 3 2-3M26 19v4"/></svg>
        </section>
      </div>
    </div>

    <aside class="catalog">
      <div class="panelhead"><span>Catalog Browser</span><button aria-label="Menu"><svg class="arrow"><use href="#caret"/></svg></button><button aria-label="Pin"><svg><use href="#pin"/></svg></button><button aria-label="Close"><svg><use href="#x"/></svg></button></div>
      <div class="catbtns"><button><svg><use href="#book"/></svg>New</button><button><svg><use href="#book-open"/></svg>Open</button><button><svg><use href="#book-save"/></svg>Save</button><button><svg><use href="#book-close"/></svg>Close</button></div>
      <div class="searchrow"><button class="boxed" aria-label="Back"><svg><use href="#back"/></svg></button><input type="text" placeholder="Search ..." aria-label="Search catalog"><button class="boxed" aria-label="Clear"><svg><use href="#redx"/></svg></button></div>
      <div class="catbox">
        <div class="items">
          <div class="cut"></div><div class="cut">Property</div>
          <button><svg><use href="#export-el"/></svg>Export Elements</button>
          <button><svg viewBox="0 0 48 48"><use href="#face-dxf"/><text class="dxf" x="32" y="41">DXF</text></svg>Face to DXF</button>
          <button><svg viewBox="0 0 48 48"><use href="#prof-dxf"/><text class="dxf" x="32" y="41">DXF</text></svg>Profile to DXF</button>
          <button><svg viewBox="0 0 48 48"><use href="#params-xl"/><text class="param" x="23" y="10">Param</text></svg>Create Params<br>By EXCEL</button>
          <button><svg viewBox="0 0 48 48"><use href="#proactive"/><text class="param" x="1" y="7">Parameters</text></svg>Create<br>PROActiveParts</button>
          <button><svg><use href="#set-xl"/></svg>Set MSExcel<br>Parameters</button>
          <button><svg><use href="#upd-xl"/></svg>Update MSExcel<br>Parameters</button>
          <button><svg><use href="#attach"/></svg>Add<br>Attachment</button>
          <button><svg><use href="#along"/></svg>Elements Along</button>
          <button><svg><use href="#replace"/></svg>Replace Element</button>
        </div>
        <div class="vscroll"><svg viewBox="0 0 16 16"><path d="M4 10l4-4 4 4"/></svg><div class="track"><i></i></div><svg viewBox="0 0 16 16"><path d="M4 6l4 4 4-4"/></svg></div>
      </div>
      <div class="paneltabs"><button>Starter</button><button class="active">IronPRO_XT Tools</button><button>Shapes</button><button class="tabmore" aria-label="More"><svg viewBox="0 0 10 8"><path fill="#555" d="M0 0h10v1H0zM1 3h8L5 7z"/></svg></button></div>
    </aside>
  </main>

  <footer class="status">
    <a href="#">http://www.ironcad.com</a>
    <span class="spacer"></span>
    <span class="size">View size:&nbsp; 823 x&nbsp; 520</span>
    <span class="units">Units: mm; deg</span>
    <div class="tools">
      <button aria-label="Fit scene"><svg><use href="#zoomfit"/></svg></button>
      <button aria-label="Zoom window"><svg><use href="#zoomwin"/></svg><svg class="mini"><use href="#caret"/></svg></button>
      <button aria-label="Camera"><svg><use href="#ycube"/></svg><svg class="mini"><use href="#caret"/></svg></button>
      <button aria-label="View"><svg><use href="#bcube"/></svg><svg class="mini"><use href="#caret"/></svg></button>
      <button aria-label="Orbit"><svg><use href="#orbit"/></svg><svg class="mini"><use href="#caret"/></svg></button>
      <button class="on" aria-label="Perspective"><svg><use href="#wedge"/></svg></button>
      <button class="near" aria-label="Visibility"><svg><use href="#glasses"/></svg><svg class="mini"><use href="#caret"/></svg></button>
      <button class="near on" aria-label="Render style"><svg><use href="#lcube"/></svg><svg class="mini"><use href="#caret"/></svg></button>
      <button class="near" aria-label="Part mode"><svg><use href="#part"/></svg><svg class="mini"><use href="#caret"/></svg></button>
      <button aria-label="Move"><svg><use href="#arrow-g"/></svg></button>
      <button class="on" aria-label="Select"><svg><use href="#cursor"/></svg></button>
      <button aria-label="Box select"><svg><use href="#cursor-box"/></svg></button>
    </div>
    <label class="pick any"><select aria-label="Filter"><option>Any</option></select><svg class="mini"><use href="#caret"/></svg></label>
    <label class="pick"><select aria-label="Configuration"><option>Default</option></select><svg class="mini"><use href="#caret"/></svg></label>
    <button class="org" aria-label="Structure"><svg><use href="#org"/></svg></button>
    <svg class="grip"><use href="#grip"/></svg>
  </footer>
</div>
</body>
</html>
```
FILE: styles.css
```css
* { box-sizing: border-box; }
html, body { height: 100%; margin: 0; }
body { font: 12px/15px "Open Sans", "Noto Sans", sans-serif; color: #444; background: #f0f0f0; overflow: hidden; }
button, input, select { font: inherit; color: inherit; background: none; border: 0; padding: 0; margin: 0; }
button { display: flex; align-items: center; justify-content: center; white-space: nowrap; }
svg { flex: none; display: block; width: 16px; height: 16px; }
.defs { position: absolute; width: 0; height: 0; }
svg.tiny { width: 6px; height: 4px; }
svg.mini { width: 5px; height: 3px; }
svg.arrow { width: 10px; height: 6px; }

.app { height: 100vh; display: flex; flex-direction: column; border: solid #245c9c; border-width: 0 1px 1px; }

.titlebar { height: 31px; flex: none; display: flex; background: #2b579a; color: #fff; padding: 0 2px; }
.qat { display: flex; align-items: center; }
.q { width: 24px; height: 24px; }
.q.logo { margin-right: 3px; width: 22px; }
.q.on { background: #2f60a4; }
.q.more { width: 14px; }
.q.more svg { width: 7px; height: 7px; }
.q svg.small { width: 14px; height: 14px; }
.title { flex: 1; text-align: center; line-height: 32px; padding-left: 5px; }
.wincontrols { display: flex; }
.wincontrols button { width: 36px; }
.wincontrols svg { width: 13px; height: 13px; }

.tabbar { height: 27px; flex: none; display: flex; justify-content: space-between; background: #2b579a; color: #fff; padding-right: 2px; }
.tabs { display: grid; grid-template-columns: 65px 60px 69px 61px 69px 79px 94px 54px 104px 98px 88px 82px 72px; }
.tabs button { margin-top: 1px; }
.tabs .active { background: #f1f1f1; color: #2b6cb0; }
.tabtools { display: flex; align-items: center; }
.tabtools button { width: 19px; height: 26px; gap: 8px; }
.tabtools button:first-child { width: 47px; }
.tabtools .help { width: 38px; gap: 10px; padding-right: 2px; }
.tabtools .doc { width: 12px; height: 12px; }

.ribbon { height: 99px; flex: none; display: flex; background: #f1f1f1; border-bottom: 1px solid #d5d5d5; padding: 4px 2px; }
.group { border-right: 1px solid #d4d4d4; display: flex; flex-direction: column; padding: 2px 3px 0; }
.g-new { padding-left: 9px; }
.g-cmd { padding-left: 11px; padding-right: 4px; }
.g-save { padding-left: 4px; }
.cmds { display: flex; height: 72px; }
.cmds button { flex-direction: column; justify-content: flex-start; width: 45px; line-height: 15px; }
.cmds button > svg { width: 32px; height: 26px; margin: 5px 0 6px; }
.cmds button > svg.tall { height: 32px; margin: 2px 0 3px; }
.cmds button > svg.framed { width: 26px; height: 26px; margin: 2px 0 9px; }
.cmds .wide { width: 78px; }
.g-cmd .wide { margin: 0 1px 0 4px; }
.cmds .mid { width: 58px; }
.cmds .wider { width: 88px; }
.cmds button:disabled { color: #b0b0b0; }
.cmds span svg { display: inline-block; vertical-align: 3px; margin-left: 1px; }
.g-start { padding: 2px 0 0; }
.g-dim { padding: 2px 3px 0; }
.caption { text-align: center; color: #666; line-height: 17px; }

.work { flex: 1; min-height: 0; display: flex; background: #e9e9e9; padding: 0 2px; }
.docs { flex: 1; min-width: 0; display: flex; flex-direction: column; }
.doctabs { height: 22px; flex: none; display: flex; justify-content: space-between; align-items: flex-end; }
.doctab { position: relative; min-width: 177px; height: 20px; margin-left: 1px; display: flex; align-items: center; padding-left: 32px; white-space: nowrap; }
.doctab .edge { position: absolute; inset: 0; width: 100%; height: 100%; }
.doctab b { position: relative; font-weight: 600; }
.doctab button { position: relative; margin: 0 5px 0 auto; }
.doctab button svg { width: 12px; height: 12px; }
.tabmenu { width: 20px; height: 20px; color: #666; }
.docbody { flex: 1; min-height: 0; display: flex; }
.scene { width: 221px; flex: none; padding-left: 1px; margin-right: 6px; display: flex; flex-direction: column; }
.viewport { flex: 1; position: relative; background: linear-gradient(#3c3c3c, #545454 14%, #808080 35%, #a6a6a6 55%, #cacaca 77%, #e0e0e0); }
.model { width: 100%; height: 100%; }
.triad { position: absolute; left: 27px; bottom: 24px; width: 40px; height: 44px; }

.panelhead { height: 24px; flex: none; display: flex; align-items: center; padding-right: 2px; }
.panelhead span { flex: 1; padding-left: 3px; }
.panelhead button { width: 19px; color: #555; }
.panelhead svg { width: 12px; height: 12px; }
.panelhead svg.arrow { width: 10px; height: 6px; }
.searchrow { height: 20px; flex: none; display: flex; }
.searchrow input { flex: 1; min-width: 0; background: #fff; padding: 0 2px 2px; }
.searchrow ::placeholder { color: #555; opacity: 1; }
.searchrow button { width: 19px; }
.searchrow .boxed { width: 17px; background: #f1ecde; border: 1px solid #b5b5b5; }
.searchrow .boxed svg { width: 14px; height: 15px; }
.scene .searchrow { gap: 2px; }
.treebox { flex: 1; min-height: 0; background: #fff; border: 1px solid #777; display: flex; flex-direction: column; justify-content: space-between; }
.tree { list-style: none; margin: 0; padding: 2px 0 0 2px; overflow: hidden; color: #111; }
.tree li { display: flex; align-items: center; height: 18px; white-space: nowrap; }
.tree .path { font-size: 11px; }
.tree .g { width: 19px; height: 18px; }
.tree .ic { margin: 0 5px 0 1px; }
.hscroll { height: 16px; display: flex; background: #f0f0f0; }
.track { flex: 1; }
.hscroll i { display: block; height: 100%; width: 74%; background: #cdcdcd; }
.hscroll path, .vscroll path { fill: none; stroke: #444; stroke-width: 2; }
.paneltabs { height: 23px; flex: none; display: flex; }
.paneltabs button { padding: 0 5px; gap: 2px; height: 22px; }
.paneltabs .active { background: #fff; border: 1px solid #aaa; border-top: 0; padding: 0 4px; }
.scene .paneltabs .active { padding: 0 2px; }

.catalog { width: 219px; flex: none; margin-left: 6px; display: flex; flex-direction: column; }
.catbtns { flex: none; display: flex; gap: 2px; height: 19px; margin: 1px 0; }
.catbtns button { flex: 1 1 0; min-width: 0; height: 18px; border: 1px solid #b0b0b0; background: #e6e6e6; gap: 1px; color: #111; }
.catbtns svg { width: 15px; height: 15px; }
.catalog .searchrow { margin-bottom: 1px; }
.catbox { flex: 1; min-height: 0; display: flex; background: #fff; border: 1px solid #777; overflow: hidden; }
.items { flex: 1; display: grid; grid-template-columns: 91px 91px; grid-template-rows: 16px; grid-auto-rows: 91px; padding-left: 2px; color: #111; }
.items button { flex-direction: column; justify-content: flex-start; line-height: 15px; }
.items svg { width: 48px; height: 48px; margin: 1px 0 3px; }
.cut { margin-top: -8px; text-align: center; }
.dxf { font: bold 6px "Liberation Sans", sans-serif; fill: #444; }
.param { font: bold 8px "Liberation Sans", sans-serif; fill: #b3141c; }
.vscroll { width: 16px; flex: none; display: flex; flex-direction: column; background: #f0f0f0; }
.vscroll .track { display: flex; flex-direction: column; padding-top: 237px; }
.vscroll i { height: 26%; min-height: 108px; background: #cdcdcd; }
.catalog .paneltabs .tabmore { margin-left: auto; padding: 0 3px; }
.tabmore svg { width: 10px; height: 8px; }
.catalog .paneltabs button { padding: 0 4px; }

.status { height: 22px; flex: none; display: flex; align-items: center; background: #f1f1f1; border-top: 1px solid #ccc; padding: 0 2px 0 5px; white-space: nowrap; }
.status a { color: #1a5fb4; }
.spacer { flex: 1; }
.size { width: 138px; }
.units { width: 90px; }
.tools { display: flex; height: 100%; }
.tools button { min-width: 24px; padding: 0 3px; gap: 8px; }
.tools .near { gap: 5px; }
.tools .on { background: #cfcfcf; }
.pick { display: flex; align-items: center; background: #fff; border: 1px solid #ccc; height: 19px; padding-right: 3px; margin-left: 3px; width: 64px; }
.pick.any { width: 88px; }
.pick select { appearance: none; flex: 1; min-width: 0; outline: 0; }
.org { width: 24px; }
.status .grip { width: 12px; height: 12px; margin: 4px 1px 0 6px; }
```
